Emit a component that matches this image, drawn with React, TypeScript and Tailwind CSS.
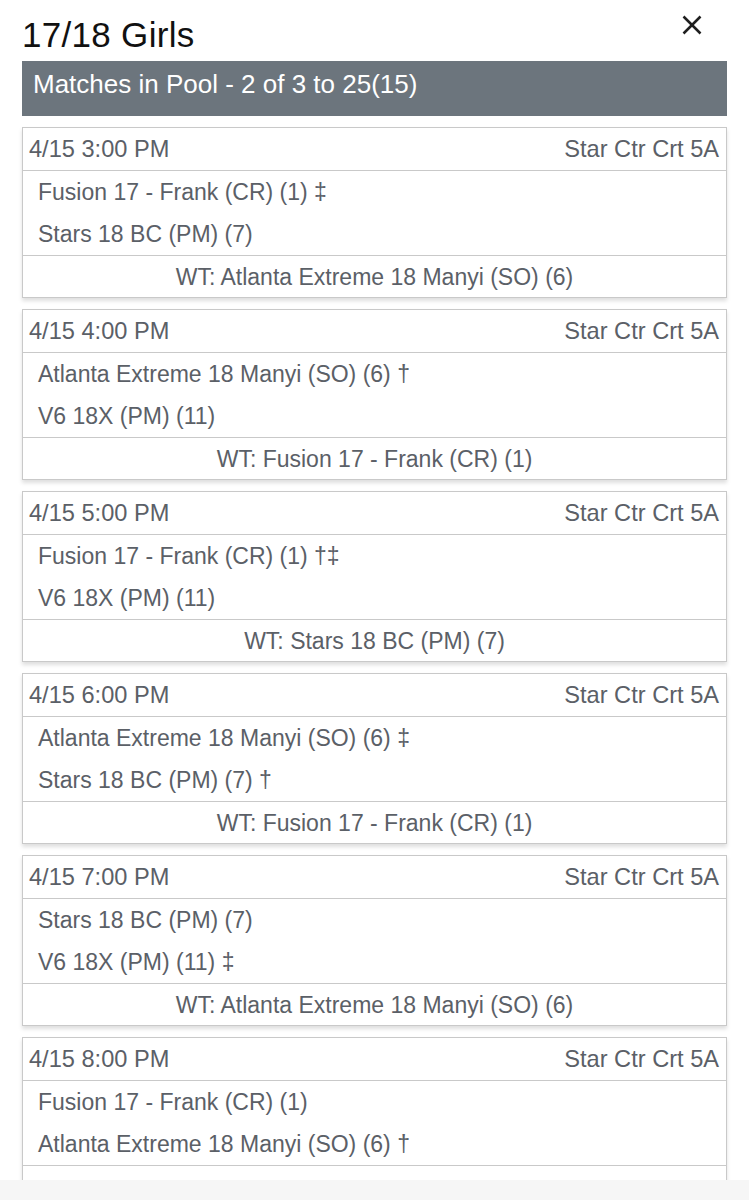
import React from "react";

type Match = { time: string; court: string; t1: string; t2: string; wt: string };

const matches: Match[] = [
  { time: "4/15 3:00 PM", court: "Star Ctr Crt 5A", t1: "Fusion 17 - Frank (CR) (1) ‡", t2: "Stars 18 BC (PM) (7)", wt: "WT: Atlanta Extreme 18 Manyi (SO) (6)" },
  { time: "4/15 4:00 PM", court: "Star Ctr Crt 5A", t1: "Atlanta Extreme 18 Manyi (SO) (6) †", t2: "V6 18X (PM) (11)", wt: "WT: Fusion 17 - Frank (CR) (1)" },
  { time: "4/15 5:00 PM", court: "Star Ctr Crt 5A", t1: "Fusion 17 - Frank (CR) (1) †‡", t2: "V6 18X (PM) (11)", wt: "WT: Stars 18 BC (PM) (7)" },
  { time: "4/15 6:00 PM", court: "Star Ctr Crt 5A", t1: "Atlanta Extreme 18 Manyi (SO) (6) ‡", t2: "Stars 18 BC (PM) (7) †", wt: "WT: Fusion 17 - Frank (CR) (1)" },
  { time: "4/15 7:00 PM", court: "Star Ctr Crt 5A", t1: "Stars 18 BC (PM) (7)", t2: "V6 18X (PM) (11) ‡", wt: "WT: Atlanta Extreme 18 Manyi (SO) (6)" },
  { time: "4/15 8:00 PM", court: "Star Ctr Crt 5A", t1: "Fusion 17 - Frank (CR) (1)", t2: "Atlanta Extreme 18 Manyi (SO) (6) †", wt: "" },
];

function MatchCard({ m }: { m: Match }) {
  return (
    <div className="shrink-0 border border-[#c9c9c9] bg-white shadow-[0_3px_4px_rgba(0,0,0,0.13)] text-[23px] leading-[28px] text-[#5b6067]">
      <div className="flex h-[42px] items-center justify-between pl-[6px] pr-[7px] text-[23.6px]">
        <span>{m.time}</span>
        <span>{m.court}</span>
      </div>
      <div className="flex flex-col border-t border-[#c9c9c9] pl-[15px]">
        <div className="flex h-[42px] items-center">{m.t1}</div>
        <div className="flex h-[42px] items-center">{m.t2}</div>
      </div>
      <div className="flex h-[42px] items-center justify-center border-t border-[#c9c9c9]">{m.wt}</div>
    </div>
  );
}

export default function App() {
  return (
    <div
      className="flex h-[1200px] w-[749px] flex-col overflow-hidden bg-white"
      style={{ fontFamily: '"Liberation Sans", Arial, Helvetica, sans-serif' }}
    >
      <div className="flex min-h-0 flex-1 flex-col overflow-hidden px-[22px]">
        <div className="flex items-start justify-between pt-[15px]">
          <h1 className="text-[35px] leading-[40px] font-normal tracking-[0.3px] text-[#111]">17/18 Girls</h1>
          <button className="mr-[25px] flex h-[20px] w-[20px] items-center justify-center" aria-label="Close">
            <svg width="20" height="20" viewBox="0 0 20 20">
              <line x1="1.5" y1="1.5" x2="18.5" y2="18.5" stroke="#1f1f1f" strokeWidth="2.5" />
              <line x1="18.5" y1="1.5" x2="1.5" y2="18.5" stroke="#1f1f1f" strokeWidth="2.5" />
            </svg>
          </button>
        </div>
        <div className="mt-[6px] h-[55px] shrink-0 bg-[#6c757d] pl-[11px] pt-[8px] text-[26px] leading-[30px] text-white">
          Matches in Pool - 2 of 3 to 25(15)
        </div>
        <div className="mt-[11px] flex flex-col gap-[11px]">
          {matches.map((m, i) => (
            <MatchCard key={i} m={m} />
          ))}
        </div>
      </div>
      <div className="h-[20px] shrink-0 bg-[#f6f6f6]" />
    </div>
  );
}
